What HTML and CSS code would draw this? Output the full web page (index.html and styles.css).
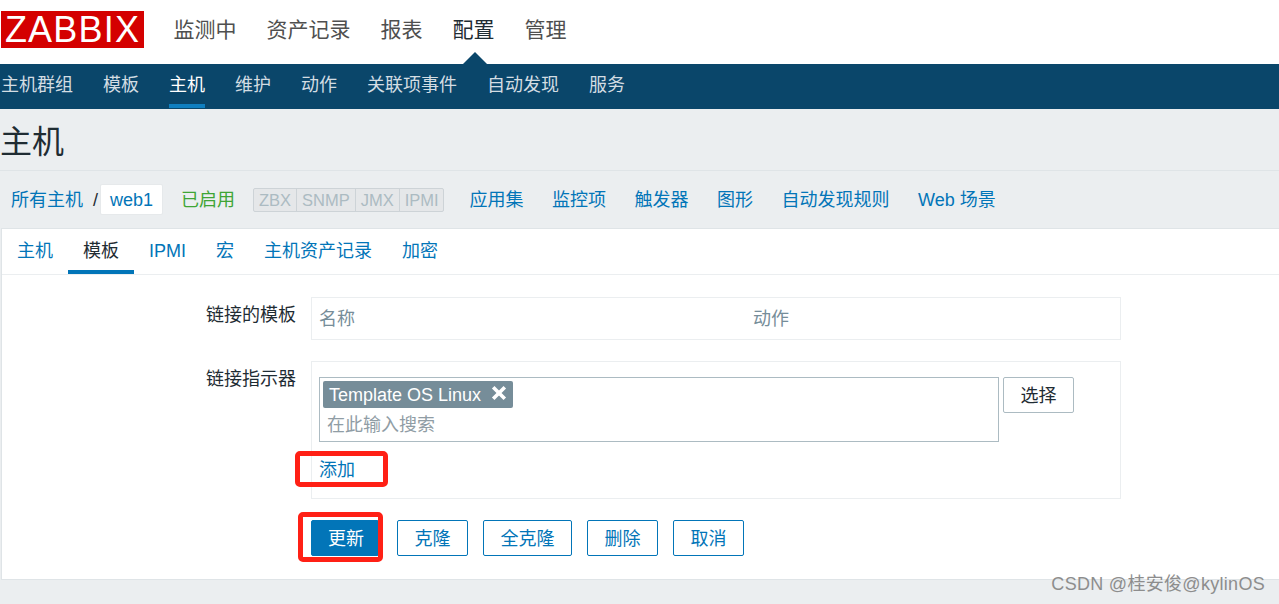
FILE: index.html
```html
<!DOCTYPE html>
<html lang="zh-CN">
<head>
<meta charset="utf-8">
<title>主机</title>
<link rel="stylesheet" href="styles.css">
</head>
<body>
<header class="top">
  <a class="logo">ZABBIX</a>
  <nav class="top-nav">
    <a>监测中</a><a>资产记录</a><a>报表</a><a class="on">配置</a><a>管理</a>
  </nav>
</header>
<nav class="sub-nav">
  <a>主机群组</a><a>模板</a><a class="on">主机</a><a>维护</a><a>动作</a><a>关联项事件</a><a>自动发现</a><a>服务</a>
</nav>
<main class="page">
  <h1 class="title">主机</h1>
  <div class="crumbs">
    <a class="crumb-link">所有主机</a>
    <span class="sep">/</span>
    <a class="crumb-cur">web1</a>
    <span class="status">已启用</span>
    <span class="avail"><i>ZBX</i><i>SNMP</i><i>JMX</i><i>IPMI</i></span>
    <span class="links"><a>应用集</a><a>监控项</a><a>触发器</a><a>图形</a><a>自动发现规则</a><a>Web 场景</a></span>
  </div>
  <section class="card">
    <div class="tabs">
      <a>主机</a><a class="on">模板</a><a>IPMI</a><a>宏</a><a>主机资产记录</a><a>加密</a>
    </div>
    <form class="form">
      <label class="lbl">链接的模板</label>
      <div class="linked"><span class="col-name">名称</span><span>动作</span></div>
      <label class="lbl lbl-2">链接指示器</label>
      <div class="box">
        <div class="ms-row">
          <div class="ms">
            <span class="tag">Template OS Linux<b class="x"><svg viewBox="0 0 16 16" width="16" height="16"><path d="M2.2 2.2l11.6 11.6M13.8 2.2L2.2 13.8" stroke="#fff" stroke-width="3.6" fill="none"/></svg></b></span>
            <span class="ph">在此输入搜索</span>
          </div>
          <button type="button" class="btn btn-grey">选择</button>
        </div>
        <a class="add">添加<span class="mark mark-add"></span></a>
      </div>
      <div class="actions">
        <span class="primary-wrap"><button type="button" class="btn btn-primary">更新</button><span class="mark mark-update"></span></span>
        <button type="button" class="btn">克隆</button>
        <button type="button" class="btn">全克隆</button>
        <button type="button" class="btn">删除</button>
        <button type="button" class="btn">取消</button>
      </div>
    </form>
  </section>
  <div class="wm">CSDN @桂安俊@kylinOS</div>
</main>
</body>
</html>
```
FILE: styles.css
```css
* { box-sizing: border-box; }
html, body { margin: 0; height: 100%; }
body {
  width: 1279px; height: 604px; overflow: hidden;
  background: #ebeef0; color: #1f2c33;
  font: 18px/24px "Liberation Sans", "Noto Sans CJK SC", sans-serif;
}
a { color: #0275b8; text-decoration: none; }
.top { height: 64px; background: #fff; display: flex; padding: 11px 0 0 1px; }
.logo {
  width: 143px; height: 37px; background: #d40000; color: #fff;
  font-size: 36px; line-height: 37px; text-align: center; letter-spacing: 1.2px;
}
.top-nav { display: flex; gap: 30px; margin-left: 29.5px; }
.top-nav a { position: relative; font-size: 21px; line-height: 38px; color: #4f4f4f; }
.top-nav a.on { color: #1f2c33; }
.top-nav a.on::after {
  content: ""; position: absolute; left: 10px; top: 41px;
  border: solid transparent; border-width: 0 12px 12px; border-bottom-color: #0a466a;
}
.sub-nav { height: 45px; background: #0a466a; display: flex; gap: 30px; padding-left: 1px; }
.sub-nav a { height: 44px; line-height: 43px; color: #d3dde3; }
.sub-nav a.on { color: #fff; border-bottom: 4px solid #0f7fc0; }
.page { position: relative; }
.title {
  margin: 0; height: 62px; padding-left: 0;
  font-size: 32px; line-height: 66px; font-weight: 400; color: #1f2c33;
  border-bottom: 1px solid #dfe4e7;
}
.crumbs { height: 57px; display: flex; align-items: center; padding-left: 11px; }
.sep { margin: 0 2px 0 10px; }
.crumb-cur {
  width: 63px; height: 31px; line-height: 31px; text-align: center;
  background: #fff; border-radius: 2px; border: 1px solid #e6e9eb;
}
.status { margin-left: 18px; color: #3fa535; }
.avail {
  display: flex; margin-left: 18px; height: 24px; width: 191px;
  border: 1px solid #cdd3d7; border-radius: 2px; background: #e5e7e9;
}
.avail i {
  font-style: normal; font-size: 16.5px; line-height: 22px; color: #acbbc2;
  padding: 0 5px; border-right: 1px solid #cdd3d7; white-space: nowrap;
}
.avail i:last-child { border-right: 0; }
.links { display: flex; gap: 28.5px; margin-left: 25.5px; }
.card {
  margin-left: 1px; height: 352px; background: #fff;
  border: 1px solid #dfe4e7; border-width: 1px 0 1px 1px;
}
.tabs { height: 46px; display: flex; border-bottom: 1px solid #ebeef0; }
.tabs a { height: 45px; padding: 0 15px; line-height: 45px; }
.tabs a.on { color: #1f2c33; border-bottom: 4px solid #0275b8; }
.form {
  display: grid; grid-template-columns: 309px 810px;
  column-gap: 0; padding-top: 22px;
}
.lbl { text-align: right; padding-right: 15px; line-height: 36px; color: #1f2c33; }
.lbl-2 { line-height: 36px; }
.linked {
  height: 43px; display: flex; align-items: center; padding-left: 7px;
  border: 1px solid #ebeef0; color: #768d99; margin-bottom: 21px;
}
.col-name { width: 434px; }
.box { height: 138px; border: 1px solid #ebeef0; padding: 15px 0 0 7px; }
.ms-row { display: flex; gap: 4px; align-items: flex-start; }
.ms {
  width: 680px; height: 65px; border: 1px solid #acbbc2;
  padding: 3px; display: flex; flex-direction: column; align-items: flex-start;
}
.tag {
  height: 27px; width: 190px; background: #768d99; color: #fff; border-radius: 2px;
  display: flex; align-items: center; justify-content: space-between;
  padding: 2px 6px 0 6px; line-height: 25px;
}
.x { display: flex; margin-top: -5px; }
.ph { margin: 4px 0 0 4px; color: #909da5; line-height: 27px; }
.add { position: relative; display: block; width: 36px; margin-top: 16px; }
.mark {
  position: absolute; border: 5px solid #ff2015; border-radius: 5px; pointer-events: none;
}
.mark-add { left: -24px; top: -7px; width: 93px; height: 36px; }
.mark-update { left: -13px; top: -8px; width: 85px; height: 50px; }
.actions {
  grid-column: 2; display: flex; gap: 15px; margin-top: 21px; align-items: flex-start;
}
.primary-wrap { position: relative; display: flex; margin-right: 3px; }
.btn {
  height: 36px; padding: 2px 16.5px 0; font: inherit; line-height: 32px;
  background: #fff; color: #0275b8; border: 1px solid #0275b8; border-radius: 2px;
}
.btn-primary { width: 68px; padding: 2px 0 0 2px; background: #0275b8; color: #fff; }
.btn-grey { width: 71px; padding: 2px 0 0; color: #1f2c33; border-color: #acbbc2; }
.wm {
  position: absolute; right: 14px; top: 463px;
  font-size: 18px; line-height: 24px; letter-spacing: .3px; color: #8d8d8d; white-space: nowrap;
}
```
